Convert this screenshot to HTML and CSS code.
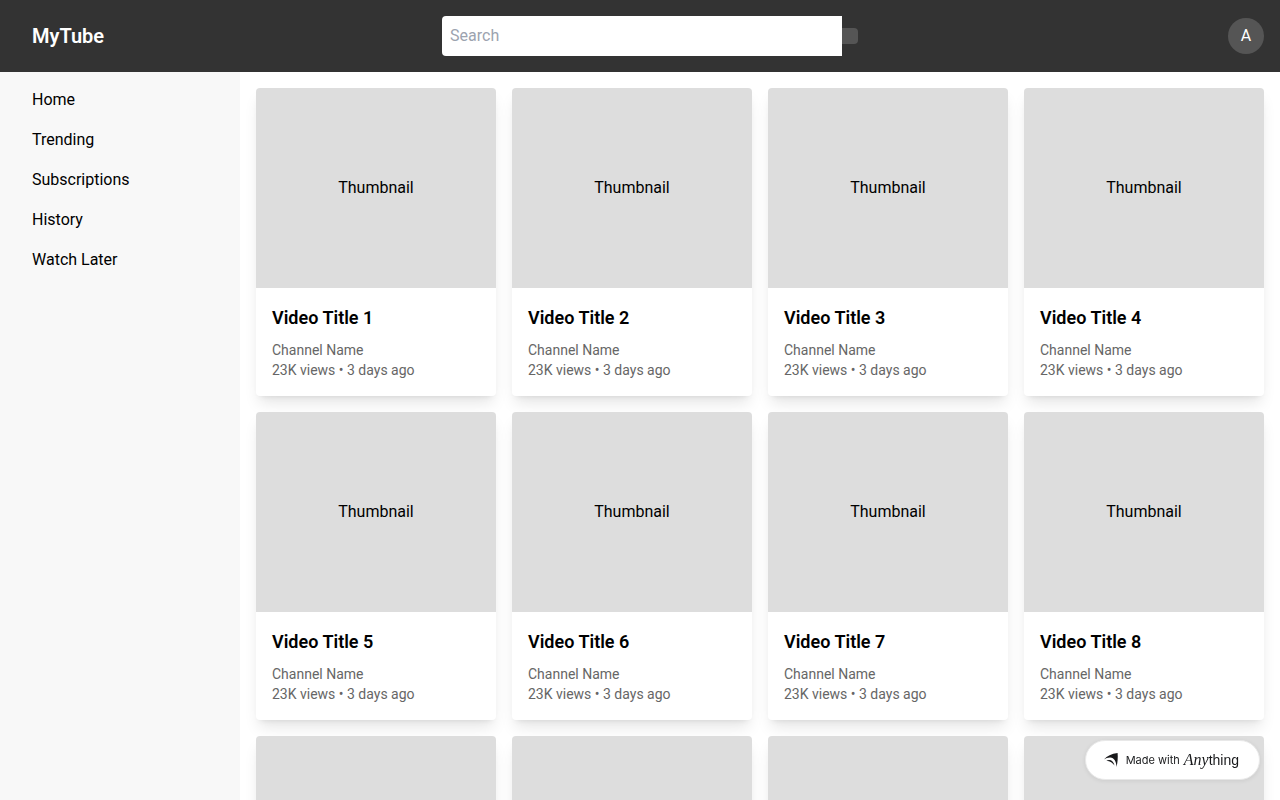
FILE: index.html
```html
<!DOCTYPE html>
<html lang="en">
<head>
    <meta charset="UTF-8">
    <title>MyTube</title>
    <meta name="viewport" content="width=device-width, initial-scale=1.0">
    <link rel="stylesheet" href="styles.css">
</head>
<body>

    <header class="header">
        <a class="logo" href="#">MyTube</a>
        <form class="search">
            <input class="search-input" type="text" placeholder="Search" aria-label="Search">
            <button class="search-button" type="button" aria-label="Submit search"></button>
        </form>
        <button class="avatar" type="button" aria-label="Account A">A</button>
    </header>

    <div class="layout">
        <nav class="sidebar">
            <a href="#">Home</a>
            <a href="#">Trending</a>
            <a href="#">Subscriptions</a>
            <a href="#">History</a>
            <a href="#">Watch Later</a>
        </nav>

        <main class="videos">
            <article class="card">
                <div class="thumbnail">Thumbnail</div>
                <div class="info">
                    <h2>Video Title 1</h2>
                    <p>Channel Name</p>
                    <p>23K views • 3 days ago</p>
                </div>
            </article>
            <article class="card">
                <div class="thumbnail">Thumbnail</div>
                <div class="info">
                    <h2>Video Title 2</h2>
                    <p>Channel Name</p>
                    <p>23K views • 3 days ago</p>
                </div>
            </article>
            <article class="card">
                <div class="thumbnail">Thumbnail</div>
                <div class="info">
                    <h2>Video Title 3</h2>
                    <p>Channel Name</p>
                    <p>23K views • 3 days ago</p>
                </div>
            </article>
            <article class="card">
                <div class="thumbnail">Thumbnail</div>
                <div class="info">
                    <h2>Video Title 4</h2>
                    <p>Channel Name</p>
                    <p>23K views • 3 days ago</p>
                </div>
            </article>
            <article class="card">
                <div class="thumbnail">Thumbnail</div>
                <div class="info">
                    <h2>Video Title 5</h2>
                    <p>Channel Name</p>
                    <p>23K views • 3 days ago</p>
                </div>
            </article>
            <article class="card">
                <div class="thumbnail">Thumbnail</div>
                <div class="info">
                    <h2>Video Title 6</h2>
                    <p>Channel Name</p>
                    <p>23K views • 3 days ago</p>
                </div>
            </article>
            <article class="card">
                <div class="thumbnail">Thumbnail</div>
                <div class="info">
                    <h2>Video Title 7</h2>
                    <p>Channel Name</p>
                    <p>23K views • 3 days ago</p>
                </div>
            </article>
            <article class="card">
                <div class="thumbnail">Thumbnail</div>
                <div class="info">
                    <h2>Video Title 8</h2>
                    <p>Channel Name</p>
                    <p>23K views • 3 days ago</p>
                </div>
            </article>
            <article class="card">
                <div class="thumbnail"></div>
            </article>
            <article class="card">
                <div class="thumbnail"></div>
            </article>
            <article class="card">
                <div class="thumbnail"></div>
            </article>
            <article class="card">
                <div class="thumbnail"></div>
            </article>
        </main>
    </div>

    <a class="badge" href="#">
        <svg class="badge-icon" width="14" height="14" viewBox="0 0 14 14" aria-hidden="true">
            <path d="M0 6.500C3 3 7.500.6 13.600 0c.4 4.800.1 9.500-1.100 14-.1-5.500-2.300-9.300-6.300-9.600C3.900 4.300 1.800 5.200 0 6.500z" fill="#18191b"/>
            <path d="M2.300 7.700c4-1.700 7.300.1 8.200 4.900-1.900-2.800-4.100-4.300-8.200-4.900z" fill="#18191b"/>
        </svg>
        <span class="badge-text">Made with</span>
        <span class="badge-brand"><em>Any</em>thing</span>
    </a>

</body>
</html>
```
FILE: styles.css
```css
* {
    margin: 0;
    padding: 0;
    box-sizing: border-box;
}

body {
    font-family: Roboto, sans-serif;
    font-size: 16px;
    line-height: 24px;
    color: #000;
    background-color: #fff;
    min-height: 100vh;
    display: flex;
    flex-direction: column;
}

a {
    color: inherit;
    text-decoration: none;
}

input, button {
    font: inherit;
    border: none;
}

/* Header */
.header {
    display: flex;
    align-items: center;
    justify-content: space-between;
    padding: 16px;
    background-color: #333;
    color: #fff;
}

.logo {
    margin-left: 16px;
    font-size: 20px;
    font-weight: 600;
    line-height: 28px;
}

.search {
    display: flex;
    align-items: center;
    margin-right: 32px;
}

.search-input {
    width: 400px;
    padding: 8px;
    border-radius: 4px 0 0 4px;
    background-color: #fff;
    color: #000;
}

.search-input::placeholder {
    color: #9ca3af;
}

.search-button {
    padding: 8px;
    border-radius: 0 4px 4px 0;
    background-color: #555;
    cursor: pointer;
}

.avatar {
    width: 36px;
    height: 36px;
    border-radius: 50%;
    background-color: #555;
    color: #fff;
    cursor: pointer;
}

/* Sidebar and video grid */
.layout {
    display: flex;
    flex: 1;
}

.sidebar {
    display: flex;
    flex-direction: column;
    gap: 16px;
    width: 240px;
    flex-shrink: 0;
    padding: 16px 32px;
    background-color: #f8f8f8;
}

.videos {
    flex: 1;
    display: grid;
    grid-template-columns: repeat(auto-fill, minmax(220px, 1fr));
    align-content: start;
    gap: 16px;
    padding: 16px;
}

.card {
    border-radius: 4px;
    overflow: hidden;
    background-color: #fff;
    box-shadow: 0 10px 15px -3px rgba(0,0,0,0.1), 0 4px 6px -4px rgba(0,0,0,0.1);
}

.thumbnail {
    display: flex;
    align-items: center;
    justify-content: center;
    height: 200px;
    background-color: #ddd;
}

.info {
    padding: 16px;
}

.info h2 {
    margin-bottom: 8px;
    font-size: 18px;
    font-weight: 600;
    line-height: 28px;
}

.info p {
    font-size: 14px;
    line-height: 20px;
    color: #666;
}

/* Floating badge */
.badge {
    position: fixed;
    right: 20px;
    bottom: 20px;
    display: flex;
    align-items: center;
    height: 40px;
    padding: 0 20px 0 18px;
    border: 1px solid #e8e8e8;
    border-radius: 20px;
    background-color: #fff;
    color: #18191b;
    box-shadow: 0 1px 4px rgba(0,0,0,0.08);
}

.badge-icon {
    margin-right: 8px;
}

.badge-text {
    margin-right: 4px;
    font-family: Inter, sans-serif;
    font-size: 11px;
}

.badge-brand {
    font-family: "Liberation Sans", sans-serif;
    font-size: 14px;
}

.badge-brand em {
    font-family: "Liberation Serif", serif;
    font-size: 16px;
}

@media (max-width: 800px) {
    .sidebar {
        display: none;
    }

    .search-input {
        width: 100%;
    }
}
```
